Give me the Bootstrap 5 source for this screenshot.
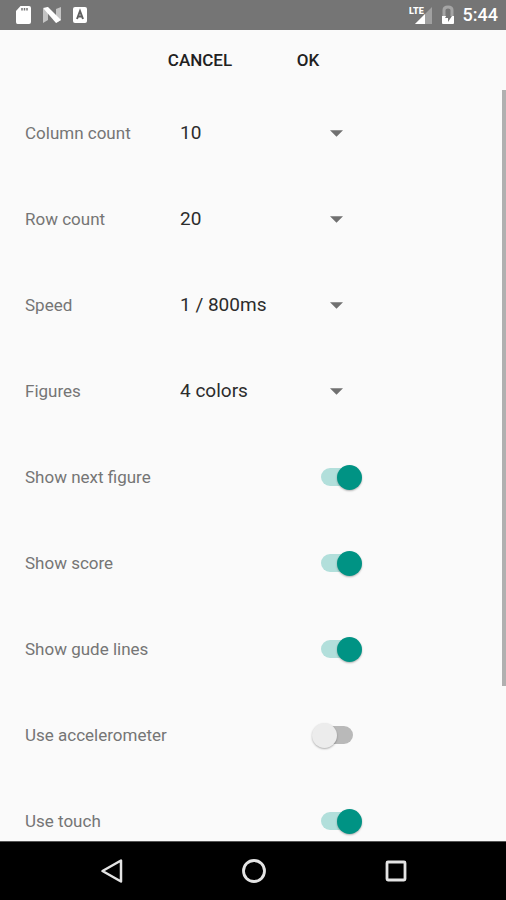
<!DOCTYPE html>
<html lang="en">
<head>
<meta charset="utf-8">
<meta name="viewport" content="width=device-width, initial-scale=1">
<title>Game settings</title>
<link href="https://cdn.jsdelivr.net/npm/bootstrap@5.3.0/dist/css/bootstrap.min.css" rel="stylesheet">
<style>
body { font-family: Roboto, "Noto Sans", sans-serif; background: #fafafa; color: #212121; }
.status-bar { height: 30px; background: #757575; color: #fff; font-size: 18px; font-weight: 500; line-height: 30px; }
.status-icons { gap: 10px; }
.lte { font-size: 9px; font-weight: 900; }
.settings-form { max-width: 362px; }
.settings-list { padding-left: 25px; }
.action-bar { height: 60px; }
.action-btn { width: 108px; font-size: 17px; font-weight: 500; line-height: 20px; color: #212121; }
.setting-row { height: 86px; flex: none; }
.setting-label { font-size: 17px; line-height: 24px; color: #757575; white-space: nowrap; }
.setting-select {
  width: 193px; height: 48px; padding: 0 44px 0 11px; border: 0; border-radius: 0;
  font-size: 19px; color: #2c2c2c; background-color: transparent;
  background-image: url("data:image/svg+xml,%3Csvg xmlns='http://www.w3.org/2000/svg' viewBox='0 0 14 7'%3E%3Cpath fill='%23707070' d='M0 0h14L7 7z'/%3E%3C/svg%3E");
  background-size: 13px 7px; background-position: right 19px center;
}
.setting-switch.form-check-input {
  display: grid; align-items: center; width: 50px; height: 26px; margin: 0;
  border: 0; background: none; border-radius: 13px;
}
.setting-switch::before, .setting-switch::after { content: ""; grid-area: 1 / 1; }
.setting-switch::before { width: 32px; height: 18px; border-radius: 9px; background: #b9b9b9; justify-self: center; }
.setting-switch::after { width: 25px; height: 25px; border-radius: 50%; background: #ececec; box-shadow: 0 1px 2px rgba(0,0,0,.3); }
.setting-switch:checked::before { background: #b2dfdb; }
.setting-switch:checked::after { background: #009384; justify-self: end; }
.scroll-thumb { width: 4px; height: 79.4%; background: #b0b0b0; }
.nav-keys { height: 59px; background: #000; border-top: 1px solid #555; }
.nav-key { width: 142px; }
</style>
<script src="https://cdn.jsdelivr.net/npm/bootstrap@5.3.0/dist/js/bootstrap.bundle.min.js"></script>
</head>
<body class="vh-100 d-flex flex-column overflow-hidden">
<header class="status-bar d-flex align-items-center justify-content-between flex-shrink-0 ps-3 pe-2">
  <div class="status-icons d-flex align-items-center">
    <svg width="16" height="20" viewBox="0 0 16 20" aria-hidden="true"><path fill="#fff" d="M4.500 1h8.500q2 0 2 2v14q0 2-2 2H1.500q-1.500 0-1.500-2V6z"/><path stroke="#757575" stroke-width="1.500" d="M6 3v2.500M8.500 3v2.500M11 3v2.500"/></svg>
    <svg width="20" height="18" viewBox="0 0 20 18" aria-hidden="true"><path fill="#c4c4c4" d="M1 3l5-2v13l-5 3zM14 3l5-2v13l-5 3z"/><path fill="#fff" d="M1 2l5-1 13 13-5 3z"/></svg>
    <svg width="16" height="16" viewBox="0 0 16 16" aria-hidden="true"><rect x="1" y="0" width="14" height="16" rx="2" fill="#fff"/><path fill="none" stroke="#606060" stroke-width="2" d="M5 12l3-8 3 8M6 9.500h4"/></svg>
  </div>
  <div class="d-flex align-items-center">
    <svg width="24" height="22" viewBox="0 0 24 22" role="img" aria-label="LTE signal"><path fill="#a0a0a0" d="M23 3v17H6z"/><path fill="#fff" d="M16 10v10H6z"/><text class="lte" x="0" y="10" fill="#fff">LTE</text></svg>
    <svg class="ms-2 me-2" width="14" height="20" viewBox="0 0 14 20" role="img" aria-label="Battery charging"><path fill="none" stroke="#a5a5a5" stroke-width="3" d="M3 11V5q0-3 4-3t4 3v6"/><path fill="#fff" d="M1 11h12v7q0 1-1 1H2q-1 0-1-1z"/><path fill="#757575" d="M8 6l-4 7h3v4l4-6H8z"/></svg>
    <span>5:44</span>
  </div>
</header>

<main class="flex-fill overflow-hidden d-flex flex-column">
  <form class="d-flex flex-column flex-fill overflow-hidden">
    <div class="settings-form action-bar d-flex justify-content-end align-items-center flex-shrink-0">
      <button type="button" class="btn action-btn px-0">CANCEL</button>
      <button type="button" class="btn action-btn px-0">OK</button>
    </div>
    <div class="position-relative flex-fill overflow-hidden">
      <div class="settings-form settings-list">
        <div class="setting-row d-flex align-items-center justify-content-between"><label class="setting-label" for="cols">Column count</label><select id="cols" class="form-select setting-select"><option>10</option></select></div>
        <div class="setting-row d-flex align-items-center justify-content-between"><label class="setting-label" for="rows">Row count</label><select id="rows" class="form-select setting-select"><option>20</option></select></div>
        <div class="setting-row d-flex align-items-center justify-content-between"><label class="setting-label" for="speed">Speed</label><select id="speed" class="form-select setting-select"><option>1 / 800ms</option></select></div>
        <div class="setting-row d-flex align-items-center justify-content-between"><label class="setting-label" for="figures">Figures</label><select id="figures" class="form-select setting-select"><option>4 colors</option></select></div>
        <div class="setting-row d-flex align-items-center justify-content-between"><label class="setting-label" for="next">Show next figure</label><input id="next" type="checkbox" role="switch" class="form-check-input setting-switch" checked></div>
        <div class="setting-row d-flex align-items-center justify-content-between"><label class="setting-label" for="score">Show score</label><input id="score" type="checkbox" role="switch" class="form-check-input setting-switch" checked></div>
        <div class="setting-row d-flex align-items-center justify-content-between"><label class="setting-label" for="guides">Show gude lines</label><input id="guides" type="checkbox" role="switch" class="form-check-input setting-switch" checked></div>
        <div class="setting-row d-flex align-items-center justify-content-between"><label class="setting-label" for="accel">Use accelerometer</label><input id="accel" type="checkbox" role="switch" class="form-check-input setting-switch"></div>
        <div class="setting-row d-flex align-items-center justify-content-between"><label class="setting-label" for="touch">Use touch</label><input id="touch" type="checkbox" role="switch" class="form-check-input setting-switch" checked></div>
      </div>
      <div class="scroll-thumb position-absolute top-0 end-0"></div>
    </div>
  </form>
</main>

<nav class="nav-keys d-flex justify-content-center flex-shrink-0" aria-label="System">
  <button type="button" class="btn nav-key p-0 border-0" aria-label="Back"><svg width="26" height="26" viewBox="0 0 26 26"><path fill="none" stroke="#e4e4e4" stroke-width="2.500" stroke-linejoin="round" d="M23 2.500v21L4.500 13z"/></svg></button>
  <button type="button" class="btn nav-key p-0 border-0" aria-label="Home"><svg width="26" height="26" viewBox="0 0 26 26"><circle cx="14" cy="13" r="10.500" fill="none" stroke="#e4e4e4" stroke-width="2.800"/></svg></button>
  <button type="button" class="btn nav-key p-0 border-0" aria-label="Overview"><svg width="26" height="26" viewBox="0 0 26 26"><rect x="5" y="4" width="18" height="18" rx="1" fill="none" stroke="#e4e4e4" stroke-width="2.800"/></svg></button>
</nav>
</body>
</html>
